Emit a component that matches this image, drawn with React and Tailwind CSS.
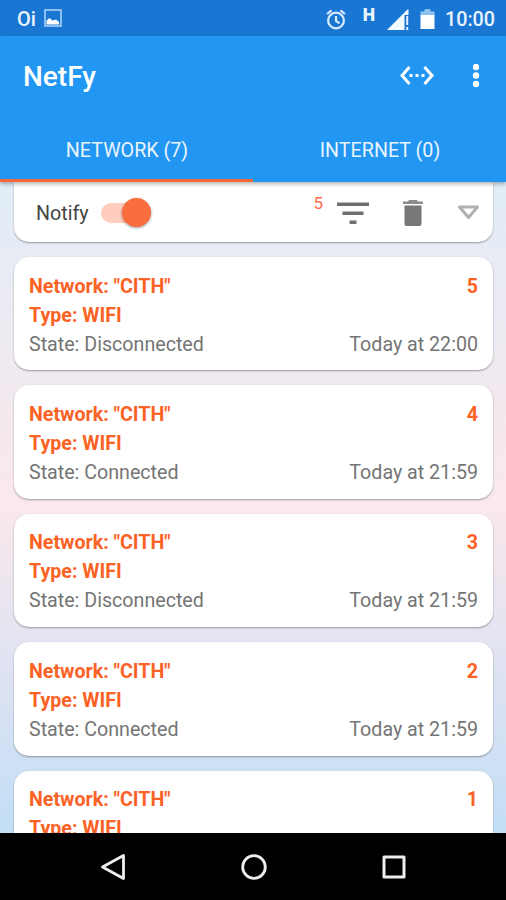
const events = [
  { id: 5, state: 'Disconnected', time: '22:00' },
  { id: 4, state: 'Connected', time: '21:59' },
  { id: 3, state: 'Disconnected', time: '21:59' },
  { id: 2, state: 'Connected', time: '21:59' },
  { id: 1 },
];

function StatusBar() {
  return (
    <div className="flex h-9 shrink-0 items-center justify-between bg-[#1976d2] pr-[11px] pl-[17px] text-[#eaf4fd]">
      <div className="flex items-center">
        <span className="w-[27px] pt-[2px] text-[20px] leading-9 font-medium">Oi</span>
        <svg className="h-[18px] w-[18px]" viewBox="0 0 18 18">
          <rect x="1" y="1" width="16" height="16" fill="none" stroke="#a9d3f7" strokeWidth="1.6" />
          <path d="M2.500 15.500v-4l3-2.500 3 2.500 3.500-1 3 2.500v2.500z" fill="#fff" />
        </svg>
      </div>
      <div className="flex items-center pt-px">
        <svg className="mr-[16px] h-[22px] w-[22px]" viewBox="0 0 22 22" fill="none" stroke="#d9ecfc" strokeWidth="2.200">
          <circle cx="11" cy="12.500" r="7.900" />
          <path d="M11 8v5l3.500 2.200M2 6l4.500-3.600M20 6l-4.500-3.600" />
        </svg>
        <span className="mr-[12px] h-[30px] text-[17.500px] leading-[23px] font-black">H</span>
        <svg className="mr-[10px] h-[24px] w-[23px]" viewBox="0 0 23 24">
          <path d="M0 23L20.500 2.500H21.500V8h-4v15z" fill="#f2f9ff" />
          <path d="M20.200 9v9M20.200 20v3" stroke="#e3f1fd" strokeWidth="2" />
        </svg>
        <svg className="mr-[10px] h-[22px] w-[15px]" viewBox="0 0 15 22">
          <path d="M.5 3.500h3.500L5 1h5l1 2.500h3.500V8H.5z" fill="#8cc2f2" />
          <path d="M.5 7h14v14H.5z" fill="#fff" />
        </svg>
        <span className="w-[50px] pt-[2px] text-[19.700px] leading-9 font-medium whitespace-nowrap">10:00</span>
      </div>
    </div>
  );
}

function Header() {
  return (
    <header className="relative z-10 h-[146px] shrink-0 bg-[#2196f3] text-white shadow-[0_2px_4px_rgba(0,0,0,0.3)]">
      <div className="flex h-20 items-center pr-[24px] pl-[23px]">
        <h1 className="flex-1 pt-[2px] text-[28px] font-medium">NetFy</h1>
        <svg className="mr-[35px] h-[22px] w-[36px]" viewBox="0 0 36 22" fill="none" stroke="#fff" strokeWidth="3">
          <path d="M10.500 2L3 10.500l7.500 8.500M25.500 2L33 10.500l-7.500 8.500" />
          <path d="M10.500 10.500h3M16.500 10.500h3M22.500 10.500h3" strokeWidth="3.200" />
        </svg>
        <svg className="h-6 w-[12px]" viewBox="0 0 12 24" fill="#fff">
          <circle cx="6" cy="3" r="3.200" />
          <circle cx="6" cy="11.500" r="3.200" />
          <circle cx="6" cy="20" r="3.200" />
        </svg>
      </div>
      <nav className="grid h-[66px] grid-cols-2 text-center text-[19.700px] leading-[57px] text-[#e9f4fe]">
        <div className="border-b-[3px] border-[#f4693a] pt-[6px] pl-px">NETWORK (7)</div>
        <div className="pt-[6px] pl-px">INTERNET (0)</div>
      </nav>
    </header>
  );
}

function Toolbar() {
  return (
    <div className="flex h-[60px] shrink-0 items-center rounded-b-[15px] bg-white pt-px pr-[13px] pl-[22px] shadow-[0_1px_2px_rgba(0,0,0,0.35)]">
      <span className="w-[65px] pt-[2px] text-[19.700px] text-[#444]">Notify</span>
      <div className="flex h-5 w-[50px] items-center justify-end rounded-full bg-[#ffcdbd]">
        <div className="h-[29px] w-[29px] shrink-0 rounded-full bg-[#fa6d3d] shadow-[0_1px_3px_rgba(0,0,0,0.4)]" />
      </div>
      <span className="ml-auto self-start pt-[8px] text-[17px] text-[#ff6a4d]">5</span>
      <svg className="ml-[13px] h-6 w-[34px]" viewBox="0 0 34 24" fill="#707070">
        <path d="M1 1.500h32V5H1zM6.500 10.500h21V14h-21zM13.500 19.500h7V23h-7z" />
      </svg>
      <svg className="ml-[32px] h-[28px] w-[22px]" viewBox="0 0 22 28" fill="#777">
        <path d="M7 1h8l1 1.500h5V5H1V2.500h5z" fill="#8c8c8c" />
        <path d="M2.500 6.500h17V25q0 2-2 2h-13q-2 0-2-2z" />
      </svg>
      <svg className="ml-[33px] h-[15px] w-[23px]" viewBox="0 0 23 15" fill="none" stroke="#b0b0b0" strokeWidth="3" strokeLinejoin="round">
        <path d="M2.500 2h18l-9 10.500z" />
      </svg>
    </div>
  );
}

function EventCard({ id, state, time }) {
  return (
    <article className="h-[113.400px] shrink-0 rounded-[15px] bg-white px-[15px] pt-[14.500px] text-[19.650px] leading-[29px] text-[#757575] shadow-[0_1px_2px_rgba(0,0,0,0.35)]">
      <div className="flex justify-between font-bold text-[#fb6225]">
        <span>Network: "CITH"</span>
        <span>{id}</span>
      </div>
      <div className="font-bold text-[#fb6225]">Type: WIFI</div>
      {state && (
        <div className="flex justify-between">
          <span>State: {state}</span>
          <span>Today at {time}</span>
        </div>
      )}
    </article>
  );
}

function NavBar() {
  return (
    <div className="flex h-[67px] shrink-0 items-center justify-between bg-black pr-[98px] pl-[99px]">
      <svg className="h-7 w-7" viewBox="0 0 28 28" fill="none" stroke="#eee" strokeWidth="2.800" strokeLinejoin="round">
        <path d="M24.500 2.500v23L3.500 14z" />
      </svg>
      <svg className="h-7 w-7" viewBox="0 0 28 28" fill="none" stroke="#eee" strokeWidth="2.800">
        <circle cx="14" cy="14" r="11.300" />
      </svg>
      <svg className="h-7 w-7" viewBox="0 0 28 28" fill="none" stroke="#eee" strokeWidth="3" strokeLinejoin="round">
        <path d="M4 4h20v20H4z" />
      </svg>
    </div>
  );
}

export default function App() {
  return (
    <div className="flex h-[900px] w-[506px] flex-col overflow-hidden font-['Roboto',sans-serif]">
      <StatusBar />
      <Header />
      <main className="flex min-h-0 flex-1 flex-col gap-[15px] overflow-hidden bg-[linear-gradient(180deg,#e1edf8_0%,#ebebf3_18%,#fae8ec_49%,#e4e4f1_70%,#d0e0f4_88%,#c2dff6_100%)] pr-[13px] pl-[14px]">
        <Toolbar />
        {events.map((event) => (
          <EventCard key={event.id} {...event} />
        ))}
      </main>
      <NavBar />
    </div>
  );
}
